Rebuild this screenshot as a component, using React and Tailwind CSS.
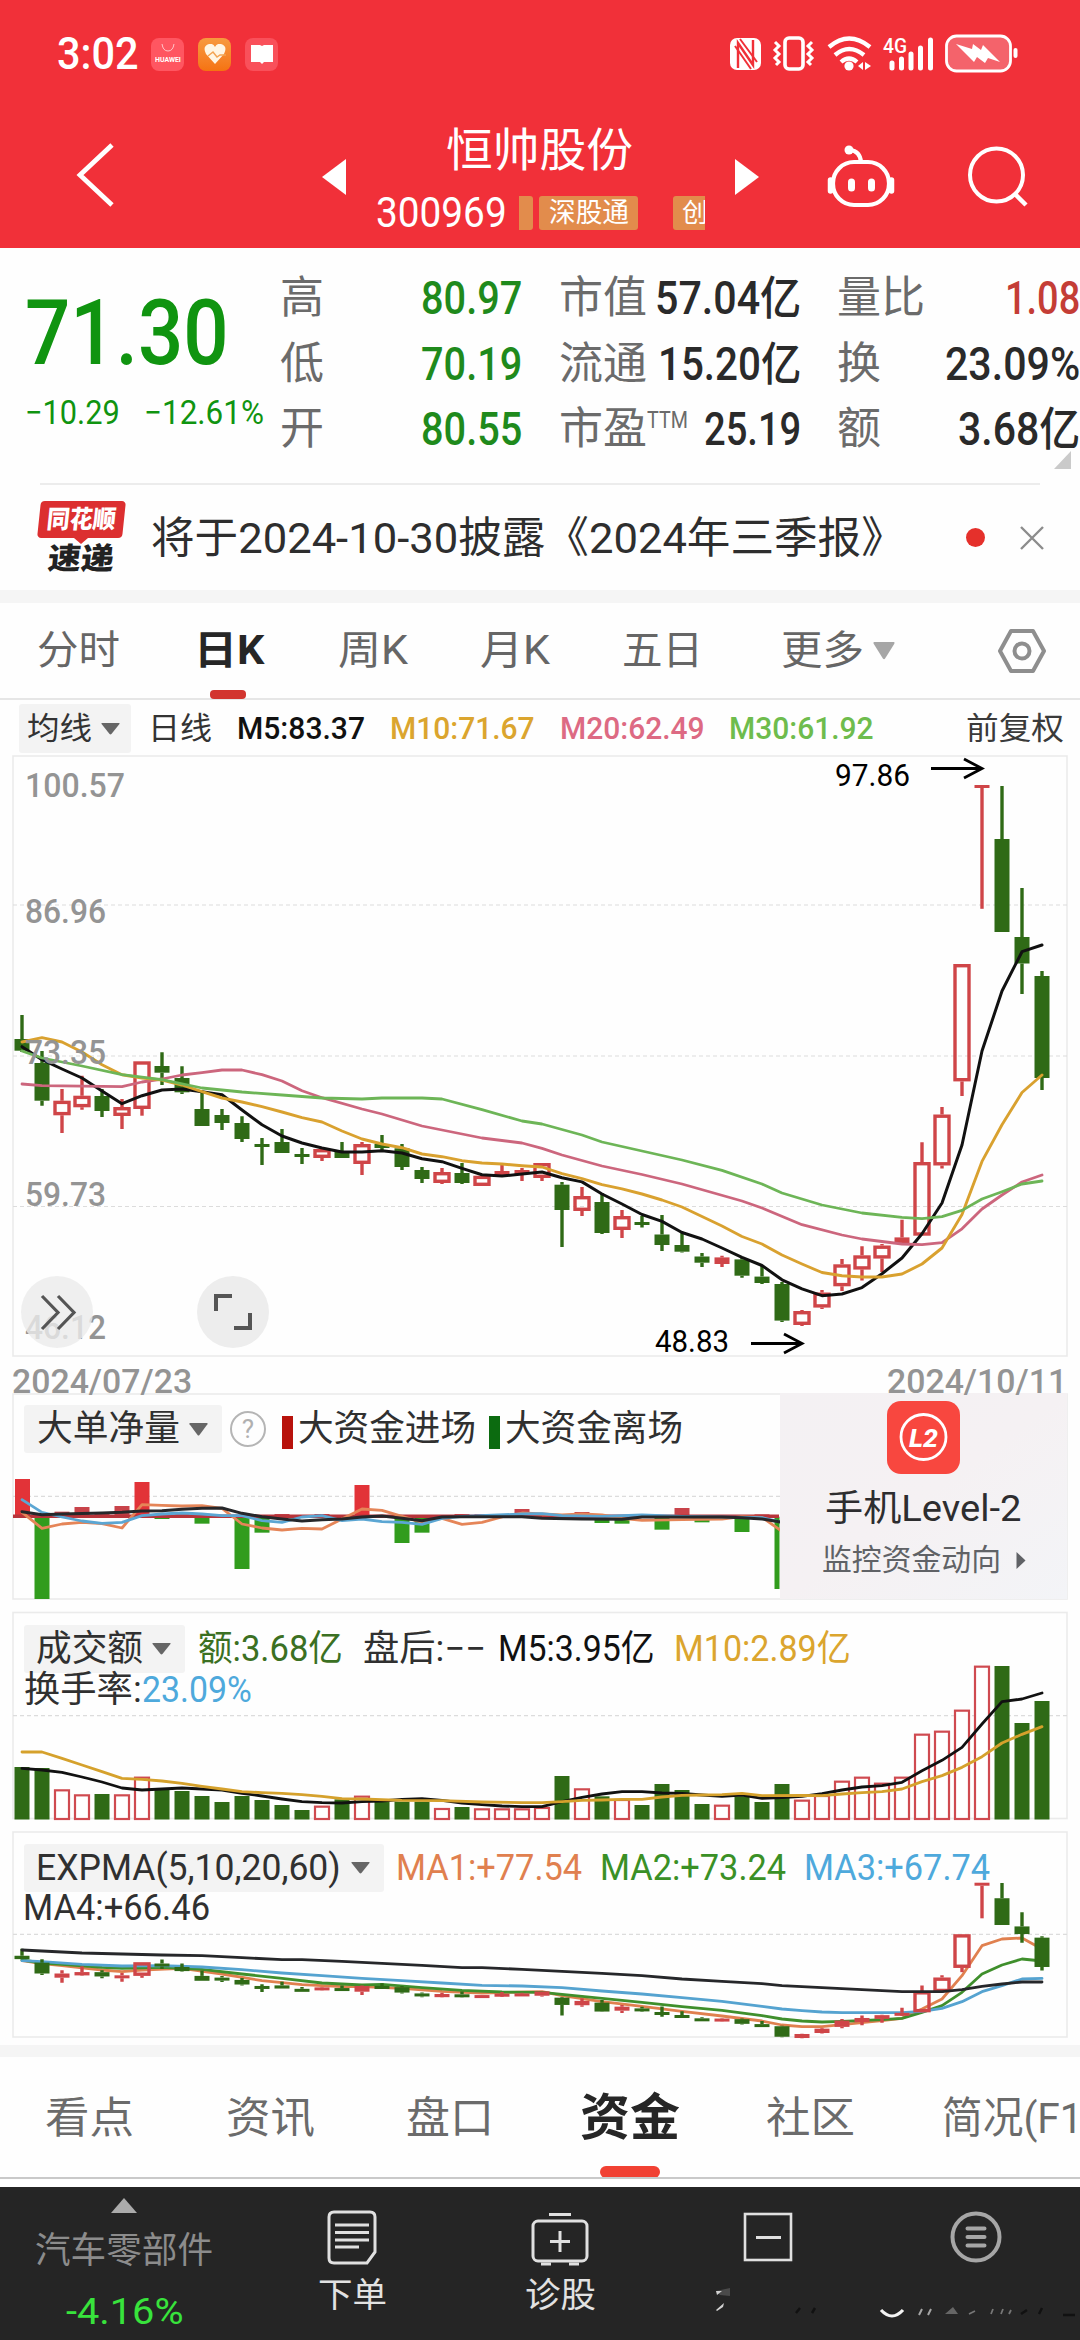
import React, { useLayoutEffect, useRef, useState } from "react";

/* Single-line text squeezed or stretched to the width of its box. */
function Fit({ className = "", children }) {
  const outer = useRef(null);
  const inner = useRef(null);
  const [scale, setScale] = useState(1);
  useLayoutEffect(() => {
    const measure = () => {
      if (inner.current.offsetWidth) setScale(outer.current.clientWidth / inner.current.offsetWidth);
    };
    measure();
    document.fonts.ready.then(measure);
  }, []);
  return (
    <span ref={outer} className={"block shrink-0 " + className}>
      <span ref={inner} className="block w-max origin-left whitespace-nowrap" style={{ transform: `scaleX(${scale})` }}>
        {children}
      </span>
    </span>
  );
}

const GREEN = "#2f6a16";
const RED = "#cf4548";
const X = (i) => 22 + i * 20;

/* [up?, high, body top, body bottom, low] in chart pixels */
const CANDLES = [
  [0, 1016, 1040, 1051.7, 1053], [0, 1052, 1064, 1101.7, 1106.7], [1, 1090, 1101.7, 1116.3, 1134], [1, 1076.7, 1096.7, 1108.3, 1110.7],
  [0, 1090, 1097, 1112, 1118], [1, 1100, 1108, 1117, 1130], [1, 1062.3, 1062.3, 1110, 1116.7], [0, 1053.3, 1067, 1073.7, 1086],
  [0, 1067.3, 1079, 1093.3, 1095], [0, 1091.7, 1110, 1127, 1127], [0, 1110, 1116, 1124, 1131], [0, 1117.3, 1124, 1140, 1143],
  [0, 1139, 1145, 1147, 1166], [0, 1130, 1143, 1154, 1154], [0, 1149, 1155, 1157, 1165], [1, 1149, 1150, 1159, 1162],
  [0, 1143, 1152.3, 1159, 1159], [1, 1143, 1145, 1165, 1176], [0, 1136, 1145, 1149, 1152], [0, 1145, 1149.3, 1168, 1171],
  [0, 1168, 1171, 1180, 1184], [1, 1169, 1173, 1184, 1185], [0, 1164, 1174, 1184, 1185], [1, 1176, 1176.7, 1187, 1187],
  [1, 1166, 1172, 1177, 1178], [1, 1169, 1171, 1175, 1182], [1, 1164, 1164, 1179, 1182], [0, 1183, 1185.7, 1211, 1248],
  [1, 1188, 1197, 1212, 1217], [0, 1194, 1203, 1234, 1235], [1, 1211, 1217, 1231, 1239], [0, 1217, 1223, 1225, 1228.6],
  [0, 1216, 1235.5, 1246, 1252], [0, 1232.7, 1246, 1252.7, 1253.5], [0, 1254, 1257.5, 1263.7, 1268], [1, 1256.7, 1258.4, 1265, 1268],
  [0, 1258.4, 1260.4, 1276.7, 1278.8], [0, 1266.5, 1277.6, 1284, 1285], [0, 1283, 1285, 1321.6, 1323], [1, 1311, 1312, 1326, 1327],
  [1, 1291, 1293.5, 1308.6, 1310], [1, 1260, 1265.3, 1287.3, 1292], [1, 1247.3, 1256.3, 1270.6, 1281.6], [1, 1245, 1246.5, 1259.6, 1273],
  [1, 1220.8, 1238.4, 1244, 1245], [1, 1143.3, 1163, 1236.7, 1237], [1, 1108, 1115.5, 1166.5, 1169.4], [1, 965, 965, 1082.4, 1097],
  [1, 786, 786, 788, 909.8], [0, 787, 840, 933, 933], [0, 889, 938, 964.5, 995], [0, 972, 977, 1079, 1091],
];

const MA5 = [1047.7, 1060.7, 1070, 1079, 1092, 1104.7, 1096.7, 1091, 1090, 1092.7, 1095.7, 1111, 1125.7, 1137, 1144, 1149, 1153, 1153, 1151.7, 1154, 1159.7, 1162.7, 1169.3, 1175.7, 1177, 1175, 1173, 1178.8, 1182.9, 1195, 1205, 1215.5, 1222.4, 1233.5, 1240, 1249, 1258.4, 1266.5, 1280.8, 1289.8, 1296.7, 1295, 1288.6, 1274.7, 1259, 1234.7, 1204, 1146, 1052, 992, 952.7, 946];
const MA10 = [1043, 1038.7, 1043, 1053, 1065.7, 1075.7, 1079, 1081, 1086, 1092.7, 1099, 1103, 1107.7, 1113, 1118.7, 1123, 1132, 1140, 1145, 1148.7, 1155, 1157.7, 1161.7, 1164, 1165, 1166.7, 1168, 1174.7, 1179.6, 1185.7, 1189.8, 1195, 1201, 1208, 1217.5, 1227, 1237.5, 1245, 1256, 1265, 1273.5, 1276.7, 1278, 1278, 1275, 1265, 1249, 1215.5, 1162.4, 1125.7, 1093.5, 1076];
const MA20 = [[0, 1085], [1, 1086.7], [5, 1087.7], [6, 1083], [7, 1080], [8, 1076], [9, 1073.7], [10, 1071], [11, 1071], [12, 1075.7], [13, 1082], [14, 1091.7], [15, 1098.7], [17, 1110], [18, 1115], [20, 1127], [23, 1139], [25, 1144], [26, 1149.4], [27, 1156], [29, 1167], [31, 1175.5], [33, 1185], [36, 1202], [37, 1209], [39, 1225.7], [41, 1236], [42, 1240], [44, 1245], [45, 1245.7], [46, 1243.7], [47, 1229.8], [48, 1210], [49, 1196], [50, 1183], [51, 1176]];
const MA30 = [[0, 1052], [1, 1059], [2, 1063], [3, 1067], [5, 1075.7], [7, 1080.7], [9, 1089], [11, 1093], [13, 1096], [15, 1099], [17, 1100], [18, 1099], [20, 1099], [21, 1100], [23, 1110.7], [25, 1122], [26, 1125], [28, 1136], [29, 1143], [31, 1152], [33, 1161], [35, 1171.4], [37, 1185], [38, 1194], [40, 1206], [42, 1214], [44, 1218.4], [45, 1219.6], [46, 1217.6], [47, 1211.4], [48, 1200], [49, 1192.7], [50, 1185], [51, 1182]];

/* Sub-charts keep their series on a 3x vertical grid: y = top + v / 3 */
const third = (top) => (v) => top + v / 3;

const FLOW = [[0, 300, 410], [1, 413, 660], [2, 398, 410], [3, 384, 410], [4, 404, 410], [5, 381, 410], [6, 309, 410], [7, 408, 420], [8, 404, 410], [9, 413, 434], [11, 413, 570], [12, 413, 461], [13, 405, 410], [15, 405, 410], [17, 318, 410], [19, 413, 492], [20, 413, 461], [22, 405, 410], [23, 405, 410], [25, 390, 410], [28, 399, 410], [29, 413, 432], [30, 413, 434], [32, 413, 452], [33, 387, 410], [34, 413, 430], [36, 413, 459], [37, 406, 410], [38, 413, 630]];
const FLOW_BLACK = [[0, 398], [1, 407], [2, 405], [4, 402], [5, 400], [6, 396], [7, 395], [8, 391], [9, 388], [10, 387], [11, 403], [12, 413], [13, 420], [14, 426], [15, 422], [16, 420], [17, 414], [18, 411], [19, 418], [20, 425], [21, 414], [22, 413], [25, 413], [26, 418], [28, 420], [30, 421], [31, 414], [35, 414], [36, 416], [37, 420], [38, 430]];
const FLOW_ORANGE = [[0, 400], [1, 448], [2, 435], [3, 430], [4, 434], [5, 447], [6, 377], [7, 379], [8, 381], [9, 380], [10, 388], [11, 435], [12, 447], [13, 453], [14, 448], [15, 450], [16, 420], [17, 390], [18, 394], [19, 412], [20, 430], [21, 418], [22, 436], [23, 430], [24, 414], [25, 402], [26, 405], [27, 408], [28, 405], [29, 408], [30, 418], [31, 424], [33, 422], [35, 420], [36, 413], [37, 415], [38, 457]];
const FLOW_BLUE = [[0, 362], [1, 400], [2, 414], [3, 426], [4, 433], [5, 430], [6, 410], [7, 405], [8, 402], [9, 405], [10, 410], [11, 410], [12, 425], [13, 430], [14, 414], [15, 410], [16, 425], [17, 420], [18, 428], [19, 430], [20, 436], [21, 418], [22, 412], [25, 405], [26, 404], [27, 410], [29, 412], [31, 408], [33, 412], [37, 416], [38, 430]];

const VOL = "g504 g507 r571 r586 g585 r586 r533 g572 g576 g591 g609 g591 g603 g618 g633 r620 g601 r590 g606 g608 g608 r627 g624 r628 r628 r628 r624 g531 r568 g592 r600 g618 g555 g573 g615 r617 g592 g609 g555 r602 r588 r545 r533 r551 r533 r404 r395 r332 r200 g201 g372 g306"
  .split(" ")
  .map((s) => [s[0] === "r", Number(s.slice(1))]);
const VOL5 = [508, 513, 520, 534, 549, 567, 573, 570, 567, 570, 573, 583, 591, 600, 608, 611, 612, 608, 606, 601, 599, 604, 612, 617, 621, 623, 623, 608, 595, 585, 578, 578, 582, 583, 588, 592, 588, 598, 596, 592, 584, 573, 564, 560, 550, 515, 484, 445, 375, 308, 300, 282];
const VOL10 = [[0, 459], [1, 459], [2, 478], [3, 498], [4, 518], [5, 538], [6, 541], [7, 546], [8, 553], [9, 562], [10, 570], [11, 578], [12, 581], [13, 583], [14, 587], [15, 592], [16, 599], [17, 600], [19, 604], [21, 605], [23, 609], [25, 611], [26, 611], [27, 608], [28, 604], [29, 603], [30, 601], [31, 601], [32, 594], [33, 589], [34, 588], [35, 587], [36, 583], [37, 590], [39, 589], [40, 590], [41, 585], [42, 581], [43, 578], [44, 570], [45, 548], [46, 530], [47, 505], [48, 473], [49, 432], [50, 406], [51, 383]];

const EXP60 = [[0, 333], [2, 339], [3, 342], [5, 345], [7, 348], [9, 350], [11, 356], [13, 362], [14, 362], [16, 367], [18, 373], [20, 379], [22, 386], [23, 386], [25, 391], [27, 397], [29, 403], [31, 410], [33, 420], [35, 427], [37, 434], [38, 440], [40, 446], [42, 452], [44, 458], [46, 458], [47, 452], [48, 442], [49, 435], [50, 429], [51, 429]];
const EXP20 = [[0, 365], [1, 368], [3, 376], [5, 381], [7, 380], [9, 384], [11, 392], [13, 402], [15, 410], [17, 418], [19, 425], [21, 432], [23, 439], [25, 441], [27, 446], [29, 456], [31, 465], [33, 476], [35, 487], [37, 502], [38, 510], [39, 515], [40, 519], [41, 521], [44, 521], [45, 517], [46, 508], [47, 488], [48, 458], [49, 440], [50, 420], [51, 418]];
const EXP10 = [[0, 363], [1, 372], [2, 376], [4, 385], [5, 388], [7, 385], [9, 391], [11, 405], [13, 418], [15, 432], [17, 438], [18, 436], [20, 446], [22, 454], [24, 459], [26, 460], [27, 466], [29, 478], [31, 490], [33, 503], [35, 514], [37, 530], [38, 540], [39, 546], [40, 549], [41, 547], [43, 542], [44, 538], [45, 520], [46, 500], [47, 460], [48, 405], [49, 378], [50, 360], [51, 366]];
const EXP5 = [[0, 365], [1, 374], [2, 380], [4, 393], [5, 398], [6, 393], [8, 388], [10, 405], [12, 425], [14, 437], [16, 443], [17, 443], [19, 448], [21, 457], [23, 462], [26, 458], [27, 470], [29, 488], [31, 502], [33, 517], [35, 531], [37, 546], [38, 558], [39, 563], [40, 563], [41, 557], [43, 545], [44, 538], [45, 510], [46, 480], [47, 410], [48, 320], [49, 300], [50, 297], [51, 330]];

function Line({ data, color, y = (v) => v, w = 2.8 }) {
  const pts = data.map((d, i) => (Array.isArray(d) ? d : [i, d])).map(([i, v]) => `${X(i)},${y(v)}`);
  return <polyline points={pts.join(" ")} fill="none" stroke={color} strokeWidth={w} strokeLinejoin="round" strokeLinecap="round" />;
}

function Candles({ y = (v) => v, sw = 3.4 }) {
  return CANDLES.map(([up, hi, top, bot, lo], i) => {
    const x = X(i);
    const c = up ? RED : GREEN;
    const t = y(top);
    const h = Math.max(y(bot) - t, 3);
    return (
      <g key={i}>
        <path d={`M${x} ${y(hi)}V${t}M${x} ${t + h}V${y(lo)}`} stroke={c} strokeWidth="3.400" />
        {up && h > 7 ? (
          <rect x={x - 7} y={t + sw / 2} width="14" height={h - sw} fill="none" stroke={c} strokeWidth={sw} />
        ) : (
          <rect x={x - 7.5} y={t} width="15" height={h} fill={c} />
        )}
      </g>
    );
  });
}

const Dash = ({ y, x2 = 1067 }) => <path d={`M13 ${y}H${x2}`} stroke="#dcdcdc" strokeWidth="1.2" strokeDasharray="4 3" />;
const Frame = ({ y, h }) => <rect x="13" y={y} width="1054" height={h} fill="none" stroke="#ebebeb" strokeWidth="1.6" />;

function Caret({ className = "" }) {
  return (
    <svg className={"shrink-0 " + className} viewBox="0 0 20 13" preserveAspectRatio="none">
      <path d="M1 0H19Q20 0 19.4 1.2L11 12Q10 13 9 12L.6 1.2Q0 0 1 0Z" fill="currentColor" />
    </svg>
  );
}

function StatusIcons() {
  return (
    <svg className="ml-auto h-[44px] w-[300px]" viewBox="725 32 300 44" fill="none" stroke="#fff">
      <rect x="730" y="38" width="31" height="32" rx="7" fill="#fff" stroke="none" />
      <path d="M738 68V43L753 65V40" stroke="#f03038" strokeWidth="2.400" />
      <path d="M740 39L757 62M735 46L751 69" stroke="#f03038" strokeWidth="2" />
      <rect x="785" y="38" width="18" height="31" rx="4" strokeWidth="3.6" />
      <path d="M775 42l4 4-4 4 4 4-4 4 4 4-3 3M812 42l-4 4 4 4-4 4 4 4-4 4 3 3" strokeWidth="3" />
      <path d="M829 47Q849 30 870 47M835 55Q849 43 864 55M841 62Q849 55 857 62" strokeWidth="4.300" />
      <circle cx="849" cy="66" r="4.6" fill="#fff" stroke="none" />
      <path d="M863 62v8l-5-4zM865 62v8l6-4z" fill="#fff" stroke="none" />
      <text x="883" y="53" textLength="24" lengthAdjust="spacingAndGlyphs" fill="#fff" stroke="none" fontSize="21" fontWeight="500" fontFamily="Roboto">4G</text>
      <path d="M892 63v5M901.500 59v9M911 54v14M920.500 48v20M930.500 40v28" strokeWidth="5" strokeLinecap="round" />
      <rect x="946.500" y="36" width="64" height="35" rx="10" fill="#f4636b" strokeWidth="2.800" />
      <path d="M956 44l16 5 1-5 8 6 2-5 17 17-12-4-3 5-8-6-3 5z" fill="#fff" stroke="none" />
      <path d="M1015.500 50v6" strokeWidth="4" strokeLinecap="round" />
    </svg>
  );
}

function Header() {
  return (
    <header className="h-[248px] bg-[#f13039] text-white">
      <div className="flex h-[108px] items-center pl-[57px] pr-[55px]">
        <Fit className="w-[82px] text-[45px] leading-[50px] font-medium">3:02</Fit>
        <div className="ml-[12px] flex h-[33px] w-[33px] flex-col items-center justify-center rounded-[8px] bg-[#ff5661]">
          <svg className="h-[8px] w-[14px]" viewBox="0 0 14 8" fill="none" stroke="#ffc4c8">
            <path d="M1 0q1 7 6 7t6-7" />
          </svg>
          <Fit className="mt-[3px] w-[26px] text-[8px] leading-[9px] font-bold">HUAWEI</Fit>
        </div>
        <div className="ml-[14px] grid h-[33px] w-[33px] place-items-center rounded-[8px] bg-gradient-to-b from-[#f79a3e] to-[#f57310]">
          <svg className="h-[20px] w-[22px]" viewBox="0 0 22 20">
            <path d="M11 20L2 10Q-2 2 5 0Q9-1 11 3Q13-1 17 0Q24 2 20 10Z" fill="#fff6e4" />
            <path d="M4 12l5-4 4 5 3-2h6" fill="none" stroke="#f3a452" strokeWidth="1.500" />
          </svg>
        </div>
        <div className="ml-[14px] grid h-[33px] w-[33px] place-items-center rounded-[8px] bg-[#f9505a]">
          <svg className="h-[20px] w-[24px]" viewBox="0 0 24 20">
            <path d="M1 1h9l2 1 2-1h9v17h-9l-2 2-2-2H1z" fill="#fff" />
          </svg>
        </div>
        <StatusIcons />
      </div>
      <div className="flex h-[140px] items-start">
        <svg className="ml-[75px] mt-[34px] h-[66px] w-[42px]" viewBox="0 0 42 66" fill="none" stroke="#fff" strokeWidth="4.800">
          <path d="M37 3L5 33L37 63" />
        </svg>
        <svg className="ml-[205px] mt-[51px] h-[36px] w-[24px]" viewBox="0 0 24 36">
          <path d="M24 0V36L0 18Z" fill="#fff" />
        </svg>
        <div className="ml-[30px] flex w-[329px] flex-col">
          <Fit className="ml-[70px] mt-[12px] w-[187px] text-[46px] leading-[60px]">恒帅股份</Fit>
          <div className="mt-[8px] flex h-[50px] items-center">
            <Fit className="w-[131px] text-[42px] leading-[50px]">300969</Fit>
            <span className="ml-[12px] h-[34px] w-[14px] rounded-r-[3px] bg-[#e28c4c]" />
            <span className="ml-[6px] flex h-[34px] w-[99px] items-center justify-center rounded-[3px] bg-[#e28c4c]">
              <Fit className="w-[80px] text-[27px] leading-[34px]">深股通</Fit>
            </span>
            <span className="ml-[35px] h-[34px] w-[32px] overflow-hidden rounded-l-[3px] bg-[#e28c4c] pl-[9px] text-[26px] leading-[34px]">创</span>
          </div>
        </div>
        <svg className="ml-[30px] mt-[51px] h-[36px] w-[24px]" viewBox="0 0 24 36">
          <path d="M0 0V36L24 18Z" fill="#fff" />
        </svg>
        <svg className="ml-[67px] mt-[34px] h-[66px] w-[70px]" viewBox="0 0 70 66" fill="none" stroke="#fff" strokeWidth="4.200">
          <rect x="7" y="20" width="56" height="43" rx="21" />
          <path d="M35 20Q34 9 24 8" strokeLinecap="round" />
          <circle cx="23" cy="8" r="4.500" fill="#fff" stroke="none" />
          <path d="M25.500 40v6M45.500 40v6" strokeWidth="7" strokeLinecap="round" />
          <path d="M4.500 38v11M65.500 38v11" strokeWidth="5.500" strokeLinecap="round" />
        </svg>
        <svg className="ml-[71px] mt-[38px] h-[62px] w-[62px]" viewBox="0 0 62 62" fill="none" stroke="#fff" strokeWidth="4">
          <circle cx="29.500" cy="29" r="26.500" />
          <path d="M48 48L59 59" strokeWidth="4.500" />
        </svg>
      </div>
    </header>
  );
}

function Quote() {
  return (
    <section className="flex h-[235px] text-[44px] leading-[66px] text-[#6b6b6b]">
      <div className="w-[281px] text-[#109410]">
        <Fit className="ml-[25px] mt-[36px] w-[204px] text-[90px] leading-[100px] font-medium">71.30</Fit>
        <div className="mt-[7px] flex text-[33px] leading-[44px]">
          <Fit className="ml-[25px] w-[95px]">−10.29</Fit>
          <Fit className="ml-[24px] w-[120px]">−12.61%</Fit>
        </div>
      </div>
      <div className="mt-[17px] w-[241px]">
        {[["高", "80.97"], ["低", "70.19"], ["开", "80.55"]].map(([k, v]) => (
          <div key={k} className="-ml-[1px] flex h-[65.500px] justify-between">
            <span>{k}</span>
            <Fit className="w-[101px] text-[46px] font-medium text-[#1f8a1c]">{v}</Fit>
          </div>
        ))}
      </div>
      <div className="ml-[37px] mt-[17px] w-[242px]">
        <div className="flex h-[65.500px] justify-between">
          <span>市值</span>
          <Fit className="w-[146px] text-[46px] font-medium text-[#2a2a2a]">57.04亿</Fit>
        </div>
        <div className="flex h-[65.500px] justify-between">
          <span>流通</span>
          <Fit className="w-[143px] text-[46px] font-medium text-[#2a2a2a]">15.20亿</Fit>
        </div>
        <div className="flex h-[65.500px]">
          <span>市盈</span>
          <Fit className="-mt-[9px] w-[41px] text-[24px]">TTM</Fit>
          <Fit className="ml-auto w-[97px] text-[46px] font-medium text-[#2a2a2a]">25.19</Fit>
        </div>
      </div>
      <div className="ml-[36px] mt-[17px] w-[243px]">
        <div className="flex h-[65.500px] justify-between">
          <span>量比</span>
          <Fit className="w-[75px] text-[46px] font-medium text-[#c43d36]">1.08</Fit>
        </div>
        <div className="flex h-[65.500px] justify-between">
          <span>换</span>
          <Fit className="w-[135px] text-[46px] font-medium text-[#2a2a2a]">23.09%</Fit>
        </div>
        <div className="flex h-[65.500px] justify-between">
          <span>额</span>
          <Fit className="w-[122px] text-[46px] font-medium text-[#2a2a2a]">3.68亿</Fit>
        </div>
        <svg className="-mt-[11px] ml-[217px] h-[18px] w-[17px]" viewBox="0 0 17 18">
          <path d="M17 0V18H0Z" fill="#cacaca" />
        </svg>
      </div>
    </section>
  );
}

function News() {
  return (
    <section className="mx-[40px] flex h-[107px] items-center border-t-2 border-[#ececec]">
      <div className="-ml-[3px] flex w-[88px] shrink-0 flex-col items-center">
        <div className="flex h-[37px] w-[85px] -skew-x-6 items-center justify-center rounded-[4px] bg-[#dc2f30]">
          <Fit className="w-[69px] text-[25px] leading-[36px] font-black text-white">同花顺</Fit>
        </div>
        <svg className="h-[6px] w-[14px]" viewBox="0 0 14 6">
          <path d="M0 0H14L7 6Z" fill="#dc2f30" />
        </svg>
        <Fit className="w-[66px] -skew-x-6 text-[30px] leading-[30px] font-black text-[#222]">速递</Fit>
      </div>
      <Fit className="ml-[26px] w-[754px] text-[43px] leading-[60px] text-[#2e2e2e]">将于2024-10-30披露《2024年三季报》</Fit>
      <span className="ml-[61px] h-[19px] w-[19px] shrink-0 rounded-full bg-[#e5302b]" />
      <svg className="ml-[35px] h-[24px] w-[24px] shrink-0" viewBox="0 0 24 24" stroke="#8c8c8c" strokeWidth="2.400">
        <path d="M1 1L23 23M23 1L1 23" />
      </svg>
    </section>
  );
}

function PeriodTabs() {
  return (
    <nav className="h-[97px] border-b-2 border-[#e6e6e6] text-[40px] leading-[60px] text-[#666]">
      <div className="flex h-[87px] items-center pt-[9px]">
        <Fit className="ml-[37px] w-[83px]">分时</Fit>
        <Fit className="ml-[74px] w-[70px] font-bold text-[#262626]">日K</Fit>
        <Fit className="ml-[74px] w-[70px]">周K</Fit>
        <Fit className="ml-[72px] w-[70px]">月K</Fit>
        <Fit className="ml-[72px] w-[81px]">五日</Fit>
        <Fit className="ml-[78px] w-[83px]">更多</Fit>
        <Caret className="ml-[9px] h-[18px] w-[22px] text-[#a6a6a6]" />
        <svg className="ml-[102px] h-[46px] w-[50px]" viewBox="0 0 50 46" fill="none" stroke="#8e8e8e" strokeWidth="4" strokeLinejoin="round">
          <path d="M14 3H36L47 23L36 43H14L3 23Z" />
          <circle cx="25" cy="23" r="7.500" />
        </svg>
      </div>
      <div className="ml-[210px] h-[9px] w-[36px] rounded-[4px] bg-[#d2352f]" />
    </nav>
  );
}

function MainChart() {
  return (
    <section className="text-[31px] leading-[48px]">
      <div className="flex h-[55px] items-center pt-[2px]">
        <div className="ml-[19px] flex h-[49px] w-[112px] items-center rounded-[3px] bg-[#f3f3f3] text-[#333]">
          <Fit className="ml-[8px] w-[65px]">均线</Fit>
          <Caret className="ml-[9px] h-[12px] w-[19px] text-[#666]" />
        </div>
        <Fit className="ml-[17px] w-[64px] text-[#333]">日线</Fit>
        <Fit className="ml-[25px] w-[128px] font-medium text-[#111]">M5:83.37</Fit>
        <Fit className="ml-[25px] w-[145px] font-medium text-[#dba52e]">M10:71.67</Fit>
        <Fit className="ml-[25px] w-[145px] font-medium text-[#dd6a83]">M20:62.49</Fit>
        <Fit className="ml-[24px] w-[145px] font-medium text-[#6ebc4d]">M30:61.92</Fit>
        <Fit className="ml-[92px] w-[98px] text-[#3a3a3a]">前复权</Fit>
      </div>
      <svg className="block h-[602px] w-[1080px]" viewBox="0 756 1080 602" fontFamily="Roboto, sans-serif">
        <Frame y={757} h={600} />
        <Dash y={906} />
        <Dash y={1057} />
        <Dash y={1207.5} />
        <Candles />
        <Line data={MA5} color="#111" w={3} />
        <Line data={MA20} color="#cc667d" />
        <Line data={MA10} color="#d9a12f" w={2.900} />
        <Line data={MA30} color="#6db557" />
        <g fill="#949494" fontSize="34" fontWeight="500">
          {[["100.57", 25, 798, 100], ["86.96", 25, 924, 81], ["73.35", 25, 1065, 81], ["59.73", 25, 1207, 81], ["46.12", 25, 1340, 81]].map(([t, x, y, w]) => (
            <text key={t} x={x} y={y} textLength={w} lengthAdjust="spacingAndGlyphs">{t}</text>
          ))}
        </g>
        <g fill="#000" fontSize="31">
          <text x="835" y="787" textLength="75" lengthAdjust="spacingAndGlyphs">97.86</text>
          <text x="655" y="1353" textLength="74" lengthAdjust="spacingAndGlyphs">48.83</text>
        </g>
        <path d="M931 769.500H981M964 760L982 769.500L964 779M751 1344.500H801M784 1335L802 1344.500L784 1354" fill="none" stroke="#000" strokeWidth="2.800" />
        <circle cx="57" cy="1313" r="36" fill="#ebebeb" fillOpacity=".8" />
        <path d="M42 1297L58 1313.500L42 1330M58 1297L74 1313.500L58 1330" fill="none" stroke="#555" strokeWidth="3.200" />
        <circle cx="233" cy="1313" r="36" fill="#ededed" />
        <path d="M216 1312V1297H232M234 1329H250V1314" fill="none" stroke="#555" strokeWidth="4" />
      </svg>
      <div className="flex h-[36px] justify-between pl-[12px] pr-[13px] text-[34px] leading-[48px] font-medium text-[#949494]">
        <Fit className="w-[180px]">2024/07/23</Fit>
        <Fit className="w-[180px]">2024/10/11</Fit>
      </div>
    </section>
  );
}

function FlowPanel() {
  const y = third(1380);
  return (
    <section className="grid h-[208px]">
      <svg className="h-[208px] w-[1080px] [grid-area:1/1]" viewBox="0 1394 1080 208">
        <Frame y={1395} h={205} />
        <Dash y={1497.3} x2={780} />
        {FLOW.map(([i, a, b]) => {
          const x = i === 0 ? 15 : X(i) - 7.5;
          const up = b <= 410;
          return <rect key={i} x={x} y={y(a)} width={i === 38 ? 5 : 15} height={y(b) - y(a)} fill={up ? (a < 350 ? "#e23338" : "#c8434a") : "#319c1d"} />;
        })}
        <path d="M13 1517.200H779" stroke="#b8343a" strokeWidth="3.400" />
        <Line data={FLOW_ORANGE} color="#e58558" y={y} />
        <Line data={FLOW_BLUE} color="#5ba6d3" y={y} />
        <Line data={FLOW_BLACK} color="#26272a" y={y} w={3} />
      </svg>
      <div className="flex [grid-area:1/1]">
        <div className="mt-[12px] flex h-[48px] w-[780px] items-center text-[36px] leading-[48px] text-[#303030]">
          <div className="ml-[24px] flex h-[48px] w-[198px] items-center rounded-[3px] bg-[#f3f3f3]">
            <Fit className="ml-[13px] w-[143px]">大单净量</Fit>
            <Caret className="ml-[9px] h-[13px] w-[19px] text-[#666]" />
          </div>
          <div className="ml-[8px] grid h-[36px] w-[36px] place-items-center rounded-full border-2 border-[#b5b5b5] text-[26px] leading-[30px] text-[#b0b0b0]">?</div>
          <span className="ml-[16px] mt-[7px] h-[33px] w-[11px] bg-[#b8120c]" />
          <Fit className="ml-[5px] w-[178px]">大资金进场</Fit>
          <span className="ml-[13px] mt-[7px] h-[33px] w-[11px] bg-[#0c6b10]" />
          <Fit className="ml-[5px] w-[178px]">大资金离场</Fit>
        </div>
        <div className="flex h-[206px] w-[287px] flex-col items-center bg-gradient-to-br from-[#f4f1f3] via-[#f5f1f3] to-[#f3f4f7]">
          <svg className="mt-[8px] h-[73px] w-[73px]" viewBox="0 0 73 73">
            <rect width="73" height="73" rx="14" fill="#f8473f" />
            <circle cx="36.500" cy="36" r="22.500" fill="none" stroke="#fff" strokeWidth="2.800" />
            <text x="22" y="46" textLength="29" lengthAdjust="spacingAndGlyphs" fill="#fff" fontSize="26" fontWeight="800" fontStyle="italic" fontFamily="Roboto">L2</text>
          </svg>
          <Fit className="mt-[13px] w-[197px] text-[36px] leading-[44px] text-[#2d2d2f]">手机Level-2</Fit>
          <div className="mt-[7px] flex items-center text-[30px] leading-[44px] text-[#606266]">
            <Fit className="w-[179px]">监控资金动向</Fit>
            <svg className="ml-[15px] h-[17px] w-[10px]" viewBox="0 0 9 17">
              <path d="M0 0L9 8.500L0 17Z" fill="#606266" />
            </svg>
          </div>
        </div>
      </div>
    </section>
  );
}

function VolumePanel() {
  const y = third(1600);
  return (
    <section className="mt-[10px] grid h-[210px]">
      <svg className="h-[210px] w-[1080px] [grid-area:1/1]" viewBox="0 1612 1080 210">
        <Frame y={1613.5} h={206} />
        <Dash y={1716.7} />
        {VOL.map(([up, v], i) =>
          up ? (
            <rect key={i} x={X(i) - 7} y={y(v) + 1} width="14" height={1819 - y(v)} fill="#fff" stroke="#cf4a50" strokeWidth="2.200" />
          ) : (
            <rect key={i} x={X(i) - 7.5} y={y(v)} width="15" height={1820.5 - y(v)} fill={GREEN} />
          )
        )}
        <Line data={VOL5} color="#111" y={y} />
        <Line data={VOL10} color="#d5a12c" y={y} />
      </svg>
      <div className="text-[36px] leading-[48px] text-[#303030] [grid-area:1/1]">
        <div className="mt-[14px] flex h-[48px] items-center">
          <div className="ml-[24px] flex h-[48px] w-[161px] items-center rounded-[3px] bg-[#f3f3f3]">
            <Fit className="ml-[12px] w-[107px]">成交额</Fit>
            <Caret className="ml-[9px] h-[12px] w-[19px] text-[#666]" />
          </div>
          <Fit className="ml-[13px] w-[145px] text-[#3b7022]">额:3.68亿</Fit>
          <Fit className="ml-[20px] w-[123px]">盘后:−−</Fit>
          <Fit className="ml-[12px] w-[157px] text-[#111]">M5:3.95亿</Fit>
          <Fit className="ml-[19px] w-[177px] text-[#dba52e]">M10:2.89亿</Fit>
        </div>
        <div className="-mt-[7px] flex">
          <Fit className="ml-[24px] w-[118px]">换手率:</Fit>
          <Fit className="w-[110px] text-[#4ea9dc]">23.09%</Fit>
        </div>
      </div>
    </section>
  );
}

function ExpmaPanel() {
  const y = third(1840);
  return (
    <section className="mt-[10px] grid h-[214px]">
      <svg className="h-[214px] w-[1080px] [grid-area:1/1]" viewBox="0 1832 1080 214">
        <Frame y={1833} h={205} />
        <Dash y={1935.3} />
        <Line data={EXP5} color="#e0804f" y={y} />
        <Line data={EXP10} color="#3f8f2c" y={y} />
        <Line data={EXP20} color="#55a3d0" y={y} />
        <Candles y={(v) => 1884 + 0.2876 * (v - 787)} />
        <Line data={EXP60} color="#26272a" y={y} />
      </svg>
      <div className="text-[36px] leading-[48px] text-[#303030] [grid-area:1/1]">
        <div className="mt-[13px] flex h-[48px] items-center">
          <div className="ml-[24px] flex h-[48px] w-[360px] items-center rounded-[3px] bg-[#f3f3f3]">
            <Fit className="ml-[12px] w-[305px]">EXPMA(5,10,20,60)</Fit>
            <Caret className="ml-[10px] h-[12px] w-[19px] text-[#666]" />
          </div>
          <Fit className="ml-[12px] w-[186px] text-[#e0804f]">MA1:+77.54</Fit>
          <Fit className="ml-[18px] w-[186px] text-[#3a9026]">MA2:+73.24</Fit>
          <Fit className="ml-[18px] w-[186px] text-[#4ea9dc]">MA3:+67.74</Fit>
        </div>
        <Fit className="-mt-[8px] ml-[23px] w-[187px]">MA4:+66.46</Fit>
      </div>
    </section>
  );
}

function InfoTabs() {
  return (
    <nav className="mt-[12px] h-[122px] overflow-hidden border-b-2 border-[#c9c9c9] text-[43px] leading-[60px] text-[#6b6b6b]">
      <div className="flex h-[109px] items-center pt-[13px]">
        <Fit className="ml-[45px] w-[89px]">看点</Fit>
        <Fit className="ml-[92px] w-[89px]">资讯</Fit>
        <Fit className="ml-[91px] w-[88px]">盘口</Fit>
        <Fit className="ml-[86px] w-[100px] text-[50px] font-bold text-[#262626]">资金</Fit>
        <Fit className="ml-[86px] w-[89px]">社区</Fit>
        <Fit className="ml-[87px] w-[178px]">简况(F10)</Fit>
      </div>
      <div className="ml-[600px] h-[12px] w-[60px] rounded-[6px] bg-[#f14133]" />
    </nav>
  );
}

function BottomBar() {
  return (
    <footer className="mt-[8px] flex h-[153px] bg-[#252525] text-[34px] leading-[44px] text-[#e2e2e2]">
      <div className="flex w-[248px] flex-col items-center">
        <svg className="mt-[11px] h-[15px] w-[26px]" viewBox="0 0 26 15">
          <path d="M13 0L26 15H0Z" fill="#ababab" />
        </svg>
        <Fit className="mt-[16px] w-[178px] text-[36px] text-[#8c8c8c]">汽车零部件</Fit>
        <Fit className="mt-[17px] w-[117px] text-[37px] text-[#38e33c]">-4.16%</Fit>
      </div>
      <div className="flex w-[208px] flex-col items-center">
        <svg className="mt-[23px] h-[56px] w-[50px]" viewBox="0 0 50 56" fill="none" stroke="#e0e0e0" strokeWidth="3">
          <path d="M7 2H43Q48 2 48 7V42L40 53H7Q2 53 2 48V7Q2 2 7 2Z" />
          <path d="M8 15H42M8 22.500H42M8 30H42M8 37H32" />
        </svg>
        <Fit className="mt-[7px] w-[69px]">下单</Fit>
      </div>
      <div className="flex w-[208px] flex-col items-center">
        <svg className="mt-[25px] h-[54px] w-[60px]" viewBox="0 0 60 54" fill="none" stroke="#e0e0e0" strokeWidth="3">
          <rect x="3" y="9" width="54" height="40" rx="5" />
          <path d="M19 2.500H41M30 19V40M20 29.500H40M11 52H21M39 52H49" />
        </svg>
        <Fit className="mt-[7px] w-[71px]">诊股</Fit>
      </div>
      <div className="flex w-[208px] flex-col items-center">
        <svg className="mt-[25px] h-[50px] w-[50px]" viewBox="0 0 50 50" fill="none" stroke="#e0e0e0" strokeWidth="2.600">
          <rect x="2" y="2" width="46" height="46" />
          <path d="M13 25.500H38" strokeWidth="3" />
        </svg>
        <svg className="mt-[12px] h-[44px] w-[110px]" viewBox="713 2274 110 44">
          <path d="M716 2291l14-3v8l-10-1z" fill="#4a4a4a" />
          <path d="M716 2291h6l-5 4zM716 2310l8-7-1 4-6 4z" fill="#d2d2d2" />
          <path d="M796 2313l4-5M812 2313l3-5" stroke="#111" strokeWidth="2.500" />
        </svg>
      </div>
      <div className="flex w-[208px] flex-col items-center">
        <svg className="mt-[24px] h-[52px] w-[52px]" viewBox="0 0 52 52" fill="none" stroke="#a6a6a6" strokeWidth="4">
          <circle cx="26" cy="26" r="23.500" />
          <path d="M17.500 17.500H34.500M17.500 26H34.500M17.500 34.500H34.500" strokeLinecap="round" />
        </svg>
        <svg className="mt-[12px] h-[44px] w-[208px]" viewBox="847 2274 208 44" fill="none">
          <path d="M856 2309q11 12 22 0" stroke="#f4f4f4" strokeWidth="3.200" />
          <path d="M894 2314l3-6M903 2314l3-6" stroke="#a5a5a5" strokeWidth="2" />
          <path d="M920 2313l8-7 5 7z" fill="#666" />
          <path d="M944 2313l6-3M966 2313l2-5M976 2313l2-5M984 2313l2-4" stroke="#777" strokeWidth="1.800" />
          <path d="M996 2313l6-4M1014 2313l3-6M1038 2314h12" stroke="#111" strokeWidth="2.500" />
        </svg>
      </div>
    </footer>
  );
}

export default function App() {
  return (
    <main className="h-[2340px] w-[1080px] overflow-hidden bg-[#fefefe] font-['Roboto','Noto_Sans_CJK_SC',sans-serif]">
      <Header />
      <Quote />
      <News />
      <div className="h-[13px] bg-[#f5f5f5]" />
      <PeriodTabs />
      <MainChart />
      <FlowPanel />
      <VolumePanel />
      <ExpmaPanel />
      <div className="-mb-[12px] h-[12px] bg-[#f5f5f5]" />
      <InfoTabs />
      <BottomBar />
    </main>
  );
}
